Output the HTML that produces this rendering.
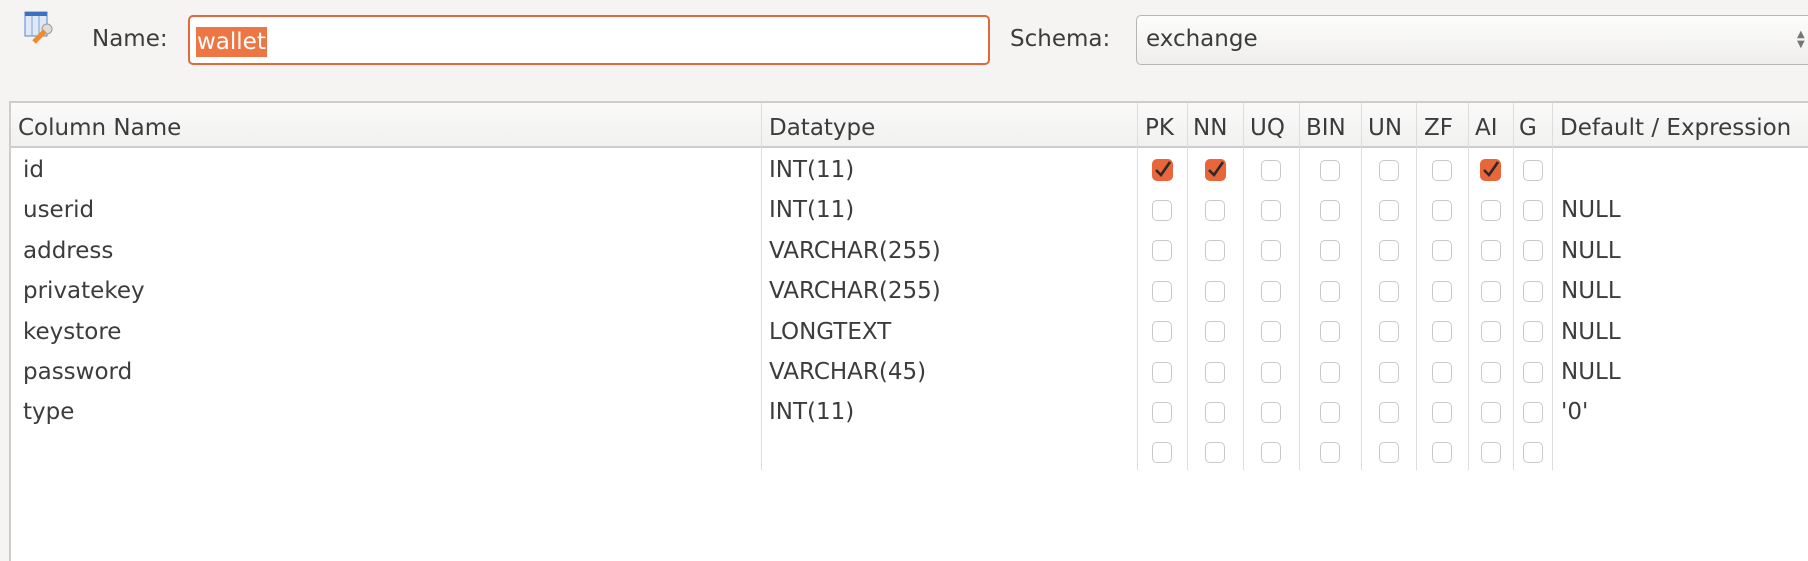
<!DOCTYPE html>
<html><head><meta charset="utf-8"><style>
*{margin:0;padding:0;box-sizing:border-box}
body{width:1808px;height:544px;background:#f5f4f3;font-family:"DejaVu Sans","Liberation Sans",sans-serif;font-size:23px;color:#3c3c3c;position:relative;overflow:hidden}
.a{position:absolute;white-space:nowrap}
.lbl{line-height:26px}
.inp{left:188px;top:15px;width:802px;height:50px;border:2px solid #e06a3a;border-radius:5px;background:#fff}
.sel{left:196px;top:27px;width:71px;height:30px;background:#ee7645;color:#fff;line-height:30px;padding-left:1px}
.sch{left:1136px;top:15px;width:690px;height:50px;border:1px solid #b8b6b2;border-radius:5px;background:linear-gradient(#fdfdfc,#efeeec)}
.tbl{left:9px;top:101px;width:1810px;height:460px;background:#fff;border-left:2px solid #cfcdca;border-top:2px solid #cfcdca}
.hdr{left:11px;top:103px;width:1800px;height:45px;background:linear-gradient(#fafafa,#f1f1f0);border-bottom:2px solid #cfcdca}
.vl{width:1px;background:#ddd}
.cb{width:20px;height:21px;border:1.5px solid #c9c9c9;border-radius:5px;background:#fff}
.ck{width:21px;height:22px;border-radius:5px;background:#e8663a}
</style></head><body>
<svg class="a" style="left:24px;top:10px" width="32" height="34" viewBox="0 0 32 34">
<rect x="1" y="2" width="22" height="24" fill="#dfe8f5" stroke="#5b86c7"/>
<rect x="1" y="2" width="22" height="4" fill="#3b6fc0"/>
<line x1="8" y1="6" x2="8" y2="26" stroke="#7fa0d6"/><line x1="15" y1="6" x2="15" y2="26" stroke="#7fa0d6"/>
<circle cx="23" cy="19" r="5" fill="#ddd" stroke="#999"/>
<line x1="10" y1="32" x2="21" y2="21" stroke="#f08a30" stroke-width="5"/>
</svg>
<div class="a lbl" style="left:92px;top:26px">Name:</div>
<div class="a inp"></div>
<div class="a sel">wallet</div>
<div class="a lbl" style="left:1010px;top:26px">Schema:</div>
<div class="a sch"></div>
<div class="a lbl" style="left:1146px;top:26px">exchange</div>
<div class="a" style="left:1797px;top:30px;font-size:10px;color:#777;line-height:10px">▲<br>▼</div>
<div class="a tbl"></div>
<div class="a hdr"></div>
<div class="a lbl" style="left:18px;top:115px">Column Name</div>
<div class="a lbl" style="left:769px;top:115px">Datatype</div>
<div class="a lbl" style="left:1145px;top:115px">PK</div>
<div class="a lbl" style="left:1193px;top:115px">NN</div>
<div class="a lbl" style="left:1250px;top:115px">UQ</div>
<div class="a lbl" style="left:1306px;top:115px">BIN</div>
<div class="a lbl" style="left:1368px;top:115px">UN</div>
<div class="a lbl" style="left:1424px;top:115px">ZF</div>
<div class="a lbl" style="left:1475px;top:115px">AI</div>
<div class="a lbl" style="left:1519px;top:115px">G</div>
<div class="a lbl" style="left:1560px;top:115px">Default / Expression</div>
<div id="g"></div>
<script>
var xs=[761,1137,1187,1243,1299,1361,1416,1468,1513,1552];
var h='';
xs.forEach(function(x){h+='<div class="a vl" style="left:'+x+'px;top:103px;height:367px"></div>';});
var rows=[["id","INT(11)",[1,1,0,0,0,0,1,0],""],["userid","INT(11)",[],"NULL"],["address","VARCHAR(255)",[],"NULL"],["privatekey","VARCHAR(255)",[],"NULL"],["keystore","LONGTEXT",[],"NULL"],["password","VARCHAR(45)",[],"NULL"],["type","INT(11)",[],"'0'"],["","",[],""]];
rows.forEach(function(r,i){var cy=170+i*40.4;var t=cy-13;
h+='<div class="a lbl" style="left:23px;top:'+t+'px">'+r[0]+'</div>';
h+='<div class="a lbl" style="left:769px;top:'+t+'px">'+r[1]+'</div>';
h+='<div class="a lbl" style="left:1561px;top:'+t+'px">'+r[3]+'</div>';
for(var c=0;c<8;c++){var cx=(xs[c+1]+xs[c+2])/2;var on=r[2][c];
if(on)h+='<div class="a ck" style="left:'+(cx-10.5)+'px;top:'+(cy-11)+'px"><svg width="21" height="22"><path d="M4 11 L9 16 L18 3" fill="none" stroke="#2a2a2a" stroke-width="2.6"/></svg></div>';
else h+='<div class="a cb" style="left:'+(cx-10)+'px;top:'+(cy-10.5)+'px"></div>';}
});
document.getElementById('g').innerHTML=h;
</script>
</body></html>
